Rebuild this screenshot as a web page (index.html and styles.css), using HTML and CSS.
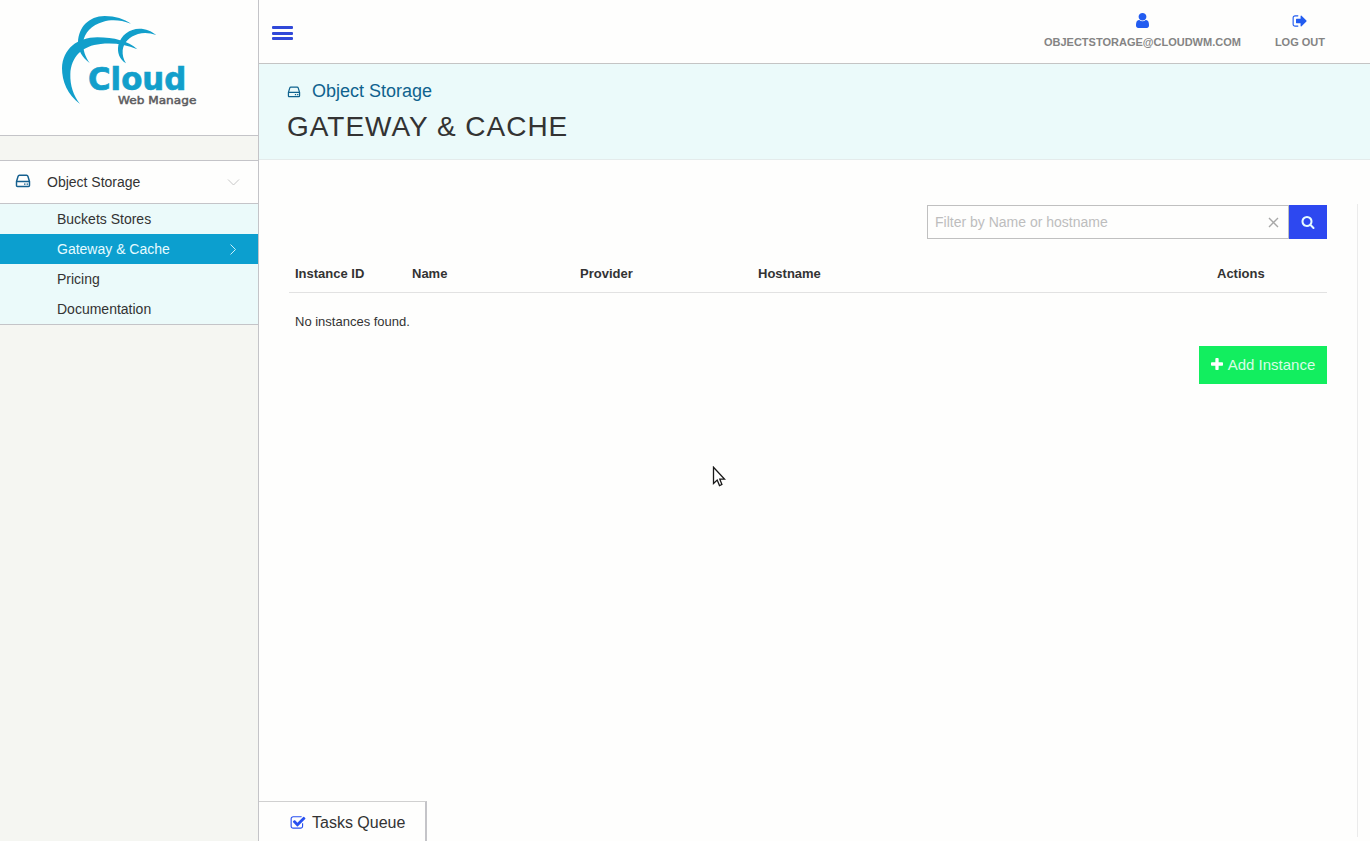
FILE: index.html
```html
<!DOCTYPE html>
<html lang="en">
<head>
<meta charset="utf-8">
<title>Gateway &amp; Cache</title>
<link rel="stylesheet" href="styles.css">
</head>
<body>
<svg class="defs" width="0" height="0" aria-hidden="true">
  <symbol id="hdd" viewBox="0 0 16 14">
    <path d="M1.500 7.500 3.100 2.200Q3.400 1.200 4.400 1.200h7.200q1 0 1.300 1l1.600 5.300V11.400q0 1.100-1.100 1.100H2.600q-1.100 0-1.100-1.100ZM1.500 7.500H14.500" fill="none" stroke="currentColor" stroke-width="1.450" stroke-linejoin="round"/>
    <path d="M9 9.400h1.500v1.400H9zM11.600 9.400h1.500v1.400h-1.500z" fill="currentColor"/>
  </symbol>
</svg>
<div class="app">
  <aside class="sidebar">
    <div class="brand">
      <svg class="logo" viewBox="0 0 480 330">
        <g fill="#129fcb">
          <path d="M84 112C86 66 116 34 164 33C196 33 222 42 243 56C212 44 184 43 160 50C124 60 103 84 100 110C98 134 106 156 119 174C96 157 84 136 84 112Z"/>
          <path d="M90 297C52 270 36 228 36 190C38 132 82 97 142 97C192 97 234 108 262 133C226 117 188 113 152 117C98 122 63 154 61 208C60 240 70 272 90 297Z"/>
          <path d="M228 175C208 163 201 143 205 121C212 90 240 71 268 71C288 71 304 78 319 90C300 84 282 82 264 87C238 95 221 112 218 136C217 150 220 163 228 175Z"/>
        </g>
        <text x="114" y="256" class="logo-name" textLength="295" lengthAdjust="spacingAndGlyphs">Cloud</text>
        <text x="204" y="297" class="logo-sub" textLength="235" lengthAdjust="spacingAndGlyphs">Web Manage</text>
      </svg>
    </div>
    <nav class="menu">
      <div class="menu-head">
        <svg class="menu-icon"><use href="#hdd"/></svg>
        <span>Object Storage</span>
        <svg class="chevron" viewBox="0 0 13 13"><path d="M1 3.500 6.500 9 12 3.500"/></svg>
      </div>
      <ul class="submenu">
        <li>Buckets Stores</li>
        <li class="active">Gateway &amp; Cache<svg class="chevron" viewBox="0 0 13 13"><path d="M3.500 1.500 8.500 6.500 3.500 11.500"/></svg></li>
        <li>Pricing</li>
        <li>Documentation</li>
      </ul>
    </nav>
  </aside>
  <div class="content">
    <header class="topbar">
      <div class="burger"><i></i><i></i><i></i></div>
      <div class="account">
        <div class="account-item">
          <svg class="user" viewBox="256 128 1280 1536" preserveAspectRatio="none"><path d="M1536 1399q0 109-62.500 187t-150.500 78h-854q-88 0-150.500-78t-62.500-187q0-85 8.500-160.500t31.500-152 58.500-131 94-89 134.500-34.500q131 128 313 128t313-128q76 0 134.500 34.500t94 89 58.500 131 31.500 152 8.500 160.500zm-256-887q0 159-112.500 271.500t-271.500 112.500-271.500-112.500-112.500-271.500 112.500-271.500 271.500-112.500 271.500 112.500 112.500 271.500z"/></svg>
          <span>OBJECTSTORAGE@CLOUDWM.COM</span>
        </div>
        <div class="account-item">
          <svg viewBox="0 0 1792 1792"><path d="M704 1440q0 4 1 20t.5 26.500-3 23.500-10 19.500-20.500 6.500h-320q-119 0-203.500-84.500t-84.500-203.500v-704q0-119 84.500-203.500t203.500-84.500h320q13 0 22.500 9.500t9.500 22.500q0 4 1 20t.5 26.500-3 23.500-10 19.500-20.500 6.500h-320q-66 0-113 47t-47 113v704q0 66 47 113t113 47h312l11.500 1 11.500 3 8 5.500 7 9 2 13.500zm928-544q0 26-19 45l-544 544q-19 19-45 19t-45-19-19-45v-288h-448q-26 0-45-19t-19-45v-384q0-26 19-45t45-19h448v-288q0-26 19-45t45-19 45 19l544 544q19 19 19 45z"/></svg>
          <span>LOG OUT</span>
        </div>
      </div>
    </header>
    <div class="page-head">
      <div class="crumb"><svg class="crumb-icon"><use href="#hdd"/></svg>Object Storage</div>
      <h1>GATEWAY &amp; CACHE</h1>
    </div>
    <main class="main">
      <section class="panel">
        <div class="search">
          <div class="field"><span>Filter by Name or hostname</span>
            <svg class="clear" viewBox="0 0 11 11"><path d="M1 1 10 10M10 1 1 10"/></svg></div>
          <button class="search-btn" aria-label="Search"><svg viewBox="0 0 1792 1792"><path d="M1216 832q0-185-131.500-316.500t-316.500-131.500-316.500 131.500-131.500 316.500 131.500 316.500 316.500 131.500 316.500-131.500 131.500-316.500zm512 832q0 52-38 90t-90 38q-54 0-90-38l-343-342q-179 124-399 124-143 0-273.500-55.500t-225-150-150-225-55.500-273.500 55.500-273.500 150-225 225-150 273.500-55.500 273.500 55.500 225 150 150 225 55.500 273.500q0 220-124 399l343 343q37 37 37 90z"/></svg></button>
        </div>
        <div class="table">
          <div class="row head"><span>Instance ID</span><span>Name</span><span>Provider</span><span>Hostname</span><span>Actions</span></div>
          <div class="empty">No instances found.</div>
        </div>
        <button class="add"><svg viewBox="192 128 1408 1408"><path d="M1600 736v192q0 40-28 68t-68 28h-416v416q0 40-28 68t-68 28h-192q-40 0-68-28t-28-68v-416h-416q-40 0-68-28t-28-68v-192q0-40 28-68t68-28h416v-416q0-40 28-68t68-28h192q40 0 68 28t28 68v416h416q40 0 68 28t28 68z"/></svg>Add Instance</button>
      </section>
    </main>
  </div>
</div>
<footer class="tasks">
  <svg viewBox="0 0 1792 1792"><path d="M1472 930v318q0 119-84.500 203.500t-203.500 84.500h-832q-119 0-203.500-84.500t-84.500-203.500v-832q0-119 84.500-203.500t203.500-84.500h832q63 0 117 25 15 7 18 23 3 17-9 29l-49 49q-10 10-23 10-3 0-9-2-23-6-45-6h-832q-66 0-113 47t-47 113v832q0 66 47 113t113 47h832q66 0 113-47t47-113v-254q0-13 9-22l64-64q10-10 23-10 6 0 12 3 20 8 20 29zm231-489l-814 814q-24 24-57 24t-57-24l-430-430q-24-24-24-57t24-57l110-110q24-24 57-24t57 24l263 263 647-647q24-24 57-24t57 24l110 110q24 24 24 57t-24 57z"/></svg>
  <span>Tasks Queue</span>
</footer>
<svg class="cursor" viewBox="0 0 14 22"><path d="M1.500 1.200V17.500L5.200 14 7.500 19.600 9.900 18.500 7.800 13.200H12.700Z"/></svg>
</body>
</html>
```

FILE: styles.css
```css
* { box-sizing: border-box; }
body {
  margin: 0;
  height: 841px;
  overflow: hidden;
  background: #fefefd;
  color: #333;
  font-family: "Liberation Sans", Arial, sans-serif;
}
svg { display: block; flex: none; }
.defs { position: absolute; }
.app { display: flex; height: 841px; }

/* Sidebar */
.sidebar {
  width: 259px;
  flex: none;
  background: #f5f6f2;
  border-right: 1px solid #c4c4c8;
}
.brand {
  height: 136px;
  padding: 5px 0 0 50px;
  background: #fefefd;
  border-bottom: 1px solid #c4c4c8;
}
.logo { width: 160px; height: 110px; }
.logo-name {
  font: bold 95px "DejaVu Sans", sans-serif;
  fill: #129fcb;
  stroke: #129fcb;
  stroke-width: 2;
}
.logo-sub {
  font: 400 34px "DejaVu Sans", sans-serif;
  fill: #5c5c60;
  stroke: #5c5c60;
  stroke-width: 1.500;
}
.menu {
  margin-top: 24px;
  border-top: 1px solid #c4c4c8;
  border-bottom: 1px solid #c4c4c8;
  font-size: 14px;
}
.menu-head {
  display: flex;
  align-items: center;
  height: 43px;
  padding: 0 18px 0 15px;
  background: #fefefd;
  border-bottom: 1px solid #c4c4c8;
}
.menu-icon {
  width: 16px;
  height: 14px;
  margin-right: 16px;
  margin-top: -2px;
  color: #15608f;
}
.chevron {
  width: 13px;
  height: 13px;
  margin-left: auto;
  fill: none;
  stroke: #c8c8c8;
}
.submenu { list-style: none; margin: 0; padding: 0; background: #ebfafa; }
.submenu li {
  display: flex;
  align-items: center;
  height: 30px;
  padding: 0 18px 0 57px;
}
.submenu .active { background: #0c9fcf; color: #e6fbff; }
.active .chevron { stroke: #c9f1fa; }

/* Header */
.content { flex: 1; display: flex; flex-direction: column; }
.topbar {
  display: flex;
  justify-content: space-between;
  height: 64px;
  padding: 0 45px 0 13px;
  border-bottom: 1px solid #c4c4c4;
}
.burger {
  display: flex;
  flex-direction: column;
  justify-content: space-between;
  height: 40px;
  padding-top: 26px;
}
.burger i { width: 21px; height: 3px; border-radius: 1px; background: #3048d8; }
.account { display: flex; gap: 34px; }
.account-item {
  display: flex;
  flex-direction: column;
  align-items: center;
  gap: 6px;
  padding-top: 13px;
  font-size: 11px;
  font-weight: bold;
  line-height: 14px;
  color: #848484;
}
.account-item svg { width: 16px; height: 16px; fill: #225cf0; }
.account-item .user { width: 13px; height: 15px; margin-bottom: 1px; }
.page-head {
  height: 96px;
  padding: 16px 0 0 28px;
  background: #ebfafa;
  border-bottom: 1px solid #e4ebeb;
}
.crumb {
  display: flex;
  align-items: center;
  font-size: 18px;
  line-height: 22px;
  color: #0f628e;
}
.crumb-icon { width: 14px; height: 12px; margin: 2px 11px 0 0; }
h1 {
  margin: 7px 0 0;
  font-size: 28px;
  font-weight: 400;
  line-height: 36px;
  letter-spacing: 0.980px;
}

/* Instances */
.main { flex: 1; padding: 44px 12px 4px 30px; }
.panel {
  height: 100%;
  padding: 1px 30px 0 0;
  border-right: 1px solid #ebebeb;
  display: flex;
  flex-direction: column;
}
.search { display: flex; width: 400px; height: 34px; margin-left: auto; }
.field {
  flex: 1;
  display: flex;
  align-items: center;
  justify-content: space-between;
  padding: 0 9px 0 7px;
  border: 1px solid #c0c0c0;
  font-size: 14px;
  color: #bdbdbd;
}
.clear { width: 11px; height: 11px; stroke: #a8a8a8; stroke-width: 1.400; }
.search-btn {
  display: grid;
  place-items: center;
  width: 38px;
  padding: 0;
  border: 0;
  background: #2d48f0;
}
.search-btn svg { width: 14px; height: 14px; fill: #e6fbff; }
.table { margin-top: 15px; font-size: 13px; }
.row {
  display: grid;
  grid-template-columns: 117px 168px 178px 459px 1fr;
  height: 39px;
  padding-left: 6px;
  line-height: 39px;
  font-weight: bold;
  border-bottom: 1px solid #e2e2e2;
}
.empty { padding: 19px 6px 0; line-height: 20px; }
.add {
  display: flex;
  align-items: center;
  justify-content: center;
  gap: 5px;
  align-self: flex-end;
  width: 128px;
  height: 38px;
  margin-top: 14px;
  padding: 0 0 2px;
  border: 0;
  background: #12ee5f;
  color: #d8fde6;
  font: 15px "Liberation Sans", Arial, sans-serif;
}
.add svg { width: 12px; height: 12px; fill: #fff; }

/* Docked over the bottom edge of the page */
.tasks {
  position: absolute;
  left: 259px;
  bottom: 0;
  display: flex;
  align-items: center;
  gap: 6px;
  width: 168px;
  height: 40px;
  padding: 2px 0 0 31px;
  background: #fefefd;
  border-top: 1px solid #d0d0d0;
  border-right: 2px solid #c4c4c8;
  font-size: 16px;
}
.tasks svg { width: 16px; height: 16px; fill: #2850f0; }

.cursor {
  position: absolute;
  left: 712px;
  top: 466px;
  width: 14px;
  height: 22px;
  fill: #fff;
  stroke: #181818;
  stroke-width: 1.300;
}
```
